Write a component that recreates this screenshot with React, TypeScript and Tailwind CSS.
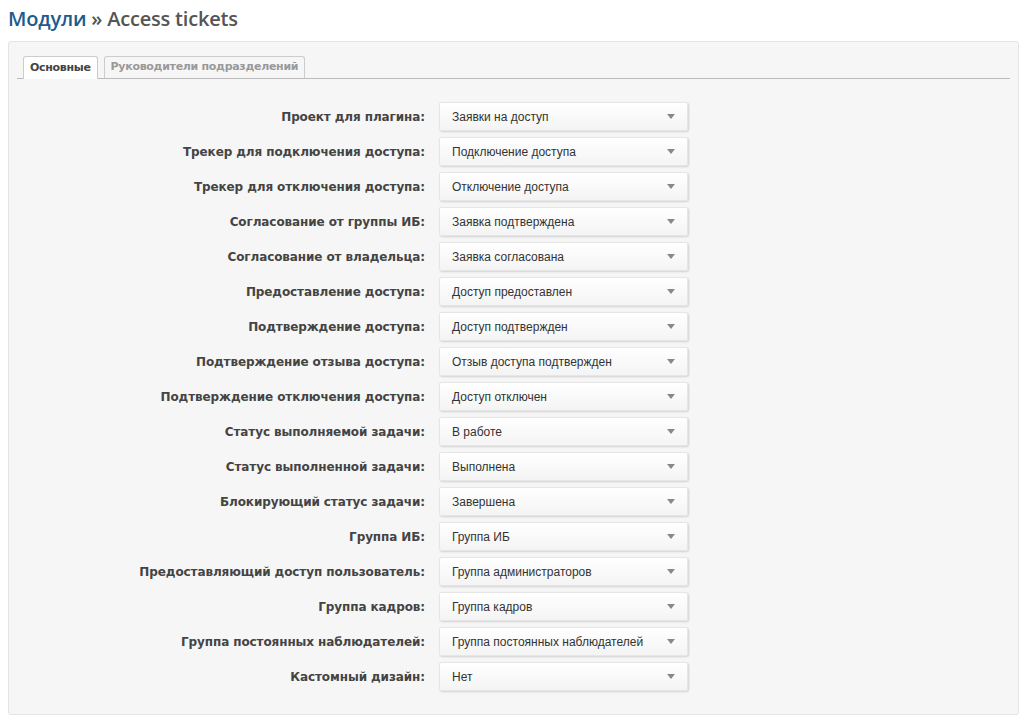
import React from 'react';

const ROWS: [string, string][] = [
  ['Проект для плагина:', 'Заявки на доступ'],
  ['Трекер для подключения доступа:', 'Подключение доступа'],
  ['Трекер для отключения доступа:', 'Отключение доступа'],
  ['Согласование от группы ИБ:', 'Заявка подтверждена'],
  ['Согласование от владельца:', 'Заявка согласована'],
  ['Предоставление доступа:', 'Доступ предоставлен'],
  ['Подтверждение доступа:', 'Доступ подтвержден'],
  ['Подтверждение отзыва доступа:', 'Отзыв доступа подтвержден'],
  ['Подтверждение отключения доступа:', 'Доступ отключен'],
  ['Статус выполняемой задачи:', 'В работе'],
  ['Статус выполненной задачи:', 'Выполнена'],
  ['Блокирующий статус задачи:', 'Завершена'],
  ['Группа ИБ:', 'Группа ИБ'],
  ['Предоставляющий доступ пользователь:', 'Группа администраторов'],
  ['Группа кадров:', 'Группа кадров'],
  ['Группа постоянных наблюдателей:', 'Группа постоянных наблюдателей'],
  ['Кастомный дизайн:', 'Нет'],
];

const Select = ({ value }: { value: string }) => (
  <div className="w-[249px] h-[29px] flex items-center justify-between pl-[12px] pr-[12px] rounded-[2px] border border-[#e6e6e6] bg-gradient-to-b from-white to-[#f4f4f4] shadow-[1px_1px_2px_rgba(0,0,0,0.15)] text-[12px] text-[#333] font-['Liberation_Sans',Arial,sans-serif]">
    <span>{value}</span>
    <svg width="8" height="5" viewBox="0 0 8 5">
      <path d="M0 0 L8 0 L4 5 Z" fill="#888" />
    </svg>
  </div>
);

export default function App() {
  return (
    <div className="min-h-[720px] bg-white px-[8px] pt-[7px] font-['DejaVu_Sans',Verdana,sans-serif]">
      <h2 className="text-[20px] font-semibold font-['Open_Sans',sans-serif] leading-[24px] text-[#555] tracking-[-0.2px]">
        <span className="text-[#1d5a8e]">Модули</span> » Access tickets
      </h2>

      <div className="mt-[10px] w-[1011px] rounded-[3px] border border-[#e4e4e4] bg-[#f6f6f6] px-[8px] pt-[14px] pb-[23px]">
        {/* tabs */}
        <div className="flex items-end gap-[6px] border-b border-[#bbb] pl-[6px]">
          <div className="relative -mb-px h-[23px] flex items-center px-[6px] rounded-t-[3px] border border-b-0 border-[#ccc] bg-white text-[11px] font-bold text-[#444] tracking-[-0.3px]">
            Основные
          </div>
          <div className="h-[22px] flex items-center px-[6px] rounded-t-[3px] border border-b-0 border-[#ccc] bg-[#f6f6f6] text-[11px] font-bold text-[#999] tracking-[-0.3px]">
            Руководители подразделений
          </div>
        </div>

        {/* settings */}
        <div className="mt-[23px] flex flex-col gap-[6px]">
          {ROWS.map(([label, value]) => (
            <div key={label} className="flex items-center">
              <div className="w-[422px] text-right pr-[14px] text-[12px] font-bold text-[#444] tracking-[-0.1px]">
                {label}
              </div>
              <Select value={value} />
            </div>
          ))}
        </div>
      </div>
    </div>
  );
}
